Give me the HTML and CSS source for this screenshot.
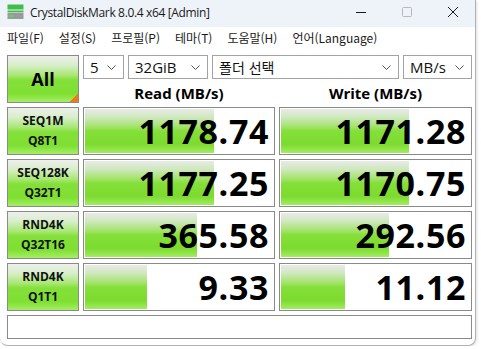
FILE: index.html
```html
<!DOCTYPE html>
<html lang="ko">
<head>
<meta charset="utf-8">
<title>CrystalDiskMark</title>
<link rel="stylesheet" href="styles.css">
</head>
<body>
<div class="window">
  <div class="titlebar">
    <svg class="appicon" width="17" height="16" viewBox="0 0 17 16">
      <rect x="0.5" y="0.5" width="16" height="5" fill="#3fbf4a"/>
      <rect x="0.5" y="6.5" width="16" height="1.5" fill="#3fbf4a"/>
      <rect x="0.5" y="8.5" width="16" height="6.5" fill="#9a9a9a"/>
      <rect x="2" y="11" width="5" height="2" fill="#5fd35a"/>
    </svg>
    <span class="title">CrystalDiskMark 8.0.4 x64 [Admin]</span>
    <div class="controls">
      <svg width="46" height="27" viewBox="0 0 46 27"><line x1="18" y1="12.5" x2="28" y2="12.5" stroke="#1a1a1a" stroke-width="1"/></svg>
      <svg width="46" height="27" viewBox="0 0 46 27"><rect x="18.5" y="7.5" width="9" height="9" rx="1" fill="none" stroke="#b8b8b8" stroke-width="1"/></svg>
      <svg width="46" height="27" viewBox="0 0 46 27"><path d="M18 7 L28 17 M28 7 L18 17" stroke="#1a1a1a" stroke-width="1"/></svg>
    </div>
  </div>
  <div class="menubar">
    <span>파일(F)</span>
    <span>설정(S)</span>
    <span>프로필(P)</span>
    <span>테마(T)</span>
    <span>도움말(H)</span>
    <span>언어(Language)</span>
  </div>
  <div class="main">
    <div class="allbtn">All</div>
    <div class="head">
      <div class="combos">
        <div class="combo c1"><span>5</span><svg width="9" height="5" viewBox="0 0 9 5"><path d="M0.5 0.5 L4.5 4.5 L8.5 0.5" fill="none" stroke="#555" stroke-width="1"/></svg></div>
        <div class="combo c2"><span>32GiB</span><svg width="9" height="5" viewBox="0 0 9 5"><path d="M0.5 0.5 L4.5 4.5 L8.5 0.5" fill="none" stroke="#555" stroke-width="1"/></svg></div>
        <div class="combo c3"><span class="kr">폴더 선택</span><svg width="9" height="5" viewBox="0 0 9 5"><path d="M0.5 0.5 L4.5 4.5 L8.5 0.5" fill="none" stroke="#555" stroke-width="1"/></svg></div>
        <div class="combo c4"><span>MB/s</span><svg width="9" height="5" viewBox="0 0 9 5"><path d="M0.5 0.5 L4.5 4.5 L8.5 0.5" fill="none" stroke="#555" stroke-width="1"/></svg></div>
      </div>
      <div class="colheads">
        <div>Read (MB/s)</div>
        <div>Write (MB/s)</div>
      </div>
    </div>

    <div class="lbl"><span>SEQ1M</span><span>Q8T1</span></div>
    <div class="cell"><div class="bar" style="width:68%"></div><div class="val">1178.74</div></div>
    <div class="cell"><div class="bar" style="width:67.5%"></div><div class="val">1171.28</div></div>

    <div class="lbl"><span>SEQ128K</span><span>Q32T1</span></div>
    <div class="cell"><div class="bar" style="width:68%"></div><div class="val">1177.25</div></div>
    <div class="cell"><div class="bar" style="width:67.5%"></div><div class="val">1170.75</div></div>

    <div class="lbl"><span>RND4K</span><span>Q32T16</span></div>
    <div class="cell"><div class="bar" style="width:59.5%"></div><div class="val">365.58</div></div>
    <div class="cell"><div class="bar" style="width:57%"></div><div class="val">292.56</div></div>

    <div class="lbl"><span>RND4K</span><span>Q1T1</span></div>
    <div class="cell"><div class="bar" style="width:32.6%"></div><div class="val">9.33</div></div>
    <div class="cell"><div class="bar" style="width:33.5%"></div><div class="val">11.12</div></div>

    <div class="status"></div>
  </div>
</div>
</body>
</html>
```
FILE: styles.css
```css
html, body {
  margin: 0;
  padding: 0;
  background: #ffffff;
}
body {
  font-family: "Open Sans", "Noto Sans CJK KR", sans-serif;
  color: #000;
}
.window {
  width: 476px;
  height: 346px;
  box-sizing: border-box;
  background: #ffffff;
  border-right: 1px solid #b0b0b0;
  border-bottom: 1px solid #b0b0b0;
  border-radius: 0 0 8px 8px;
  box-shadow: 1px 1px 3px rgba(0,0,0,0.12);
  overflow: hidden;
}
.titlebar {
  height: 27px;
  background: #eef3f9;
  display: flex;
  align-items: center;
}
.appicon {
  margin-left: 7px;
  margin-right: 6px;
  margin-top: -3px;
}
.title {
  font-family: "Open Sans", sans-serif;
  font-size: 12px;
  letter-spacing: -0.35px;
  color: #1a1a1a;
  margin-top: -3px;
}
.controls {
  margin-left: auto;
  display: flex;
  align-self: flex-start;
  margin-right: -1px;
}
.controls svg {
  display: block;
}
.menubar {
  height: 20px;
  display: flex;
  align-items: center;
  gap: 15px;
  padding-left: 7px;
  font-family: "Noto Sans CJK KR", sans-serif;
  font-size: 12px;
  color: #1a1a1a;
}
.main {
  padding: 8px 0 0 7px;
  display: grid;
  grid-template-columns: 72px 192px 193px;
  grid-template-rows: 48px repeat(4, 48px) 24px;
  column-gap: 4px;
  row-gap: 4px;
}
.allbtn, .lbl {
  box-sizing: border-box;
  border: 1px solid #8a8a8a;
  background: linear-gradient(to bottom, #eef0ec 0%, #d8eecb 20%, #a9e774 42%, #84e03a 52%, #7fdf32 82%, #a6ee66 100%);
  display: flex;
  align-items: center;
  justify-content: center;
  font-weight: 700;
}
.allbtn {
  font-size: 18px;
  background:
    linear-gradient(135deg, transparent 50%, #f07a14 50%) right 0 bottom 0 / 8px 8px no-repeat,
    linear-gradient(to bottom, #eef0ec 0%, #d8eecb 20%, #a9e774 42%, #84e03a 52%, #7fdf32 82%, #a6ee66 100%);
}
.lbl {
  flex-direction: column;
  font-size: 12px;
  line-height: 20px;
  color: #111;
}
.head {
  grid-column: 2 / 4;
  display: flex;
  flex-direction: column;
}
.combos {
  display: flex;
  gap: 4px;
  height: 24px;
}
.combo {
  box-sizing: border-box;
  height: 24px;
  border: 1px solid #a3a3a3;
  background: #fff;
  display: flex;
  align-items: center;
  justify-content: space-between;
  padding: 0 7px 0 6px;
  font-size: 15px;
  color: #111;
}
.combo span {
  line-height: 20px;
}
.combo .kr {
  font-family: "Noto Sans CJK KR", sans-serif;
  font-size: 14px;
}
.c1 { width: 41px; }
.c2 { width: 80px; }
.c3 { width: 187px; }
.c4 { width: 69px; }
.colheads {
  display: grid;
  grid-template-columns: 192px 193px;
  column-gap: 4px;
  height: 24px;
  font-weight: 700;
  font-size: 15px;
  line-height: 24px;
  text-align: center;
  padding-top: 2px;
  box-sizing: border-box;
}
.cell {
  box-sizing: border-box;
  border: 1px solid #8a8a8a;
  background: #fff;
  padding: 1px 0 1px 1px;
  display: grid;
  overflow: hidden;
}
.bar {
  grid-area: 1 / 1;
  height: 100%;
  background: linear-gradient(to bottom, #e8ebe6 0%, #d0e8c0 18%, #a4e36c 40%, #86df3a 50%, #7cdb2e 80%, #a2ec62 100%);
}
.val {
  grid-area: 1 / 1;
  justify-self: end;
  align-self: center;
  font-weight: 700;
  font-size: 34px;
  line-height: 1;
  padding-right: 5px;
  letter-spacing: 0.6px;
}
.status {
  grid-column: 1 / 4;
  box-sizing: border-box;
  border: 1px solid #8a8a8a;
  background: #fff;
}
```
